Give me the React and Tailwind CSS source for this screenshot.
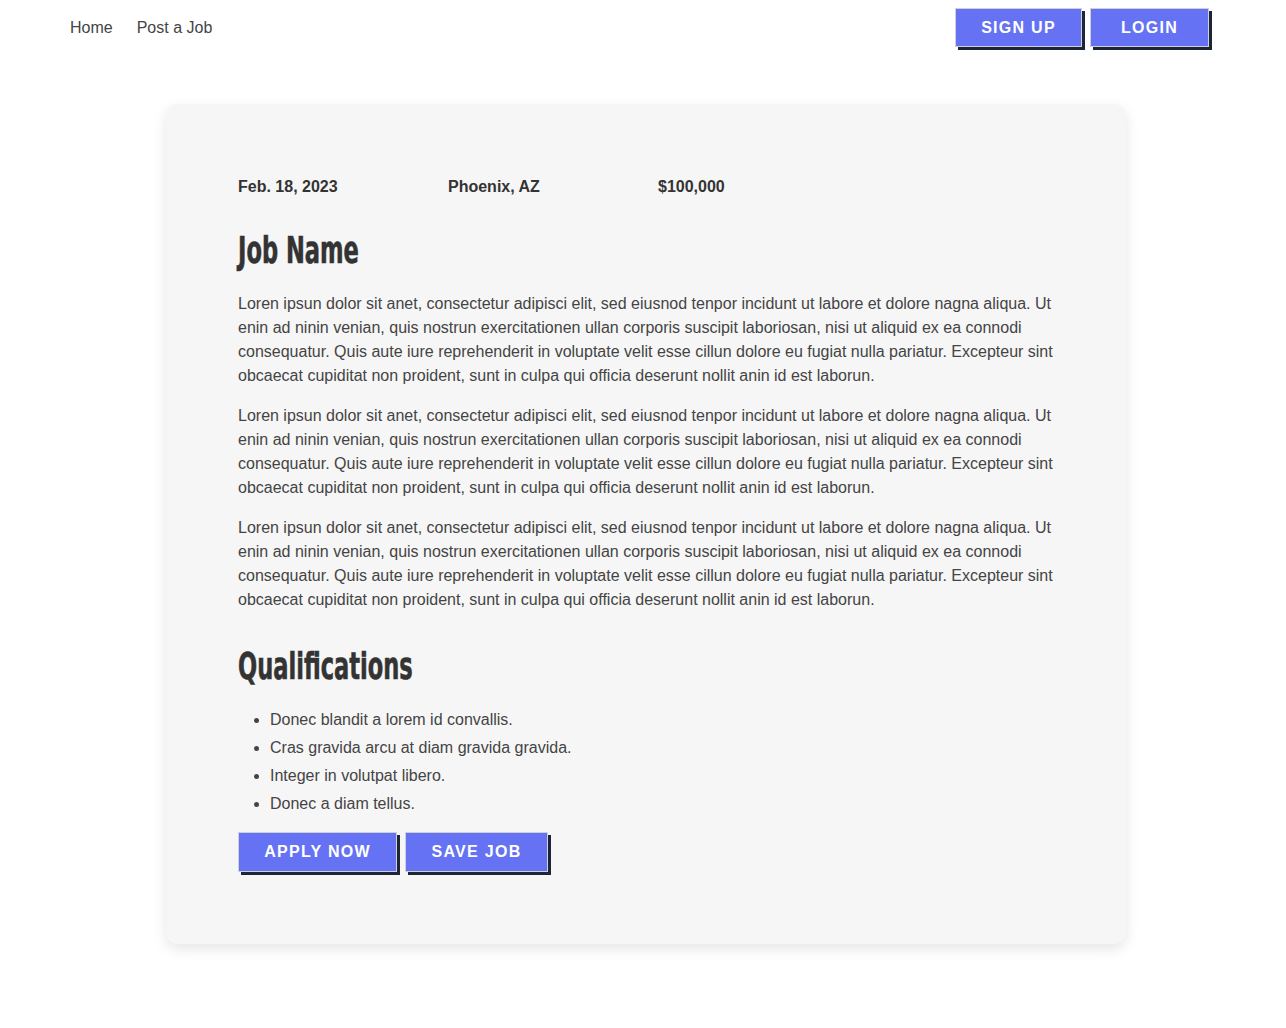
import React from "react";

const para =
  "Loren ipsun dolor sit anet, consectetur adipisci elit, sed eiusnod tenpor incidunt ut labore et dolore nagna aliqua. Ut enin ad ninin venian, quis nostrun exercitationen ullan corporis suscipit laboriosan, nisi ut aliquid ex ea connodi consequatur. Quis aute iure reprehenderit in voluptate velit esse cillun dolore eu fugiat nulla pariatur. Excepteur sint obcaecat cupiditat non proident, sunt in culpa qui officia deserunt nollit anin id est laborun.";

const quals = [
  "Donec blandit a lorem id convallis.",
  "Cras gravida arcu at diam gravida gravida.",
  "Integer in volutpat libero.",
  "Donec a diam tellus.",
];

function Btn({ children, className = "" }) {
  return (
    <button
      className={
        "bg-[#6472f3] text-white font-bold text-[16px] tracking-[0.08em] uppercase border border-[#d0d0d8] shadow-[3px_3px_0_#1e2538] leading-none " +
        className
      }
    >
      {children}
    </button>
  );
}

function Heading({ children, className = "" }) {
  return (
    <h2
      className={
        "text-[#333] font-bold text-[38px] leading-none origin-left scale-x-[0.66] [-webkit-text-stroke:0.6px_#333] " +
        className
      }
      style={{ fontFamily: '"DejaVu Sans Condensed", "Liberation Sans Narrow", sans-serif' }}
    >
      {children}
    </h2>
  );
}

export default function App() {
  return (
    <div
      className="min-h-screen bg-white text-[#444] text-[16px]"
      style={{ fontFamily: '"Liberation Sans", Arial, sans-serif' }}
    >
      {/* Top nav */}
      <nav className="flex items-center justify-between pl-[70px] pr-[77px] pt-[8px]">
        <div className="flex items-center gap-6">
          <a className="text-[#444]">Home</a>
          <a className="text-[#444]">Post a Job</a>
        </div>
        <div className="flex items-center gap-2">
          <Btn className="w-[127px] h-[39px]">Sign Up</Btn>
          <Btn className="w-[119px] h-[39px]">Login</Btn>
        </div>
      </nav>

      {/* Job card */}
      <main className="flex justify-center pl-[6px] pt-[57px] pb-[80px]">
        <div className="w-[960px] bg-[#f6f6f6] rounded-xl shadow-[0_5px_14px_rgba(0,0,0,0.1)] px-[72px] pt-[74px] pb-[72px]">
          <div className="flex font-bold text-[#333] leading-[18px]">
            <span className="w-[210px]">Feb. 18, 2023</span>
            <span className="w-[210px]">Phoenix, AZ</span>
            <span className="w-[210px]">$100,000</span>
          </div>

          <Heading className="mt-[35px]">Job Name</Heading>

          <div className="mt-[23px] flex flex-col gap-4 leading-6">
            <p>{para}</p>
            <p>{para}</p>
            <p>{para}</p>
          </div>

          <Heading className="mt-[35px]">Qualifications</Heading>

          <ul className="mt-[21px] list-disc pl-8 leading-7">
            {quals.map((q) => (
              <li key={q}>{q}</li>
            ))}
          </ul>

          <div className="mt-[14px] flex gap-2">
            <Btn className="w-[159px] h-[40px]">Apply Now</Btn>
            <Btn className="w-[143px] h-[40px]">Save Job</Btn>
          </div>
        </div>
      </main>
    </div>
  );
}
